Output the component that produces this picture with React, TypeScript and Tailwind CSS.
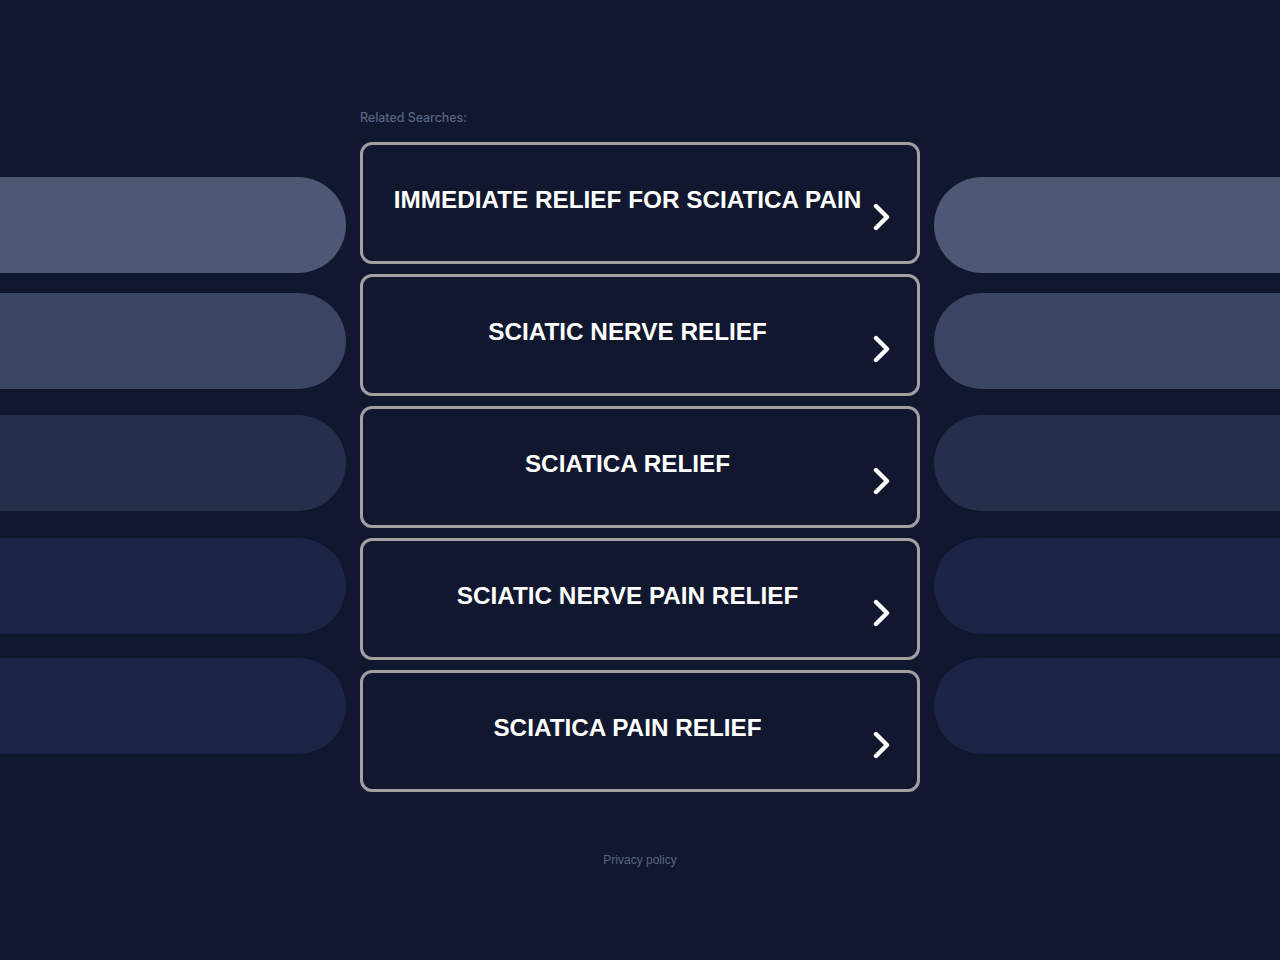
const SEARCHES = [
  "IMMEDIATE RELIEF FOR SCIATICA PAIN",
  "SCIATIC NERVE RELIEF",
  "SCIATICA RELIEF",
  "SCIATIC NERVE PAIN RELIEF",
  "SCIATICA PAIN RELIEF",
];

const PILLS = [
  { className: "mt-[177px] bg-[#4e5874]" },
  { className: "mt-[20px] bg-[#3b4462]" },
  { className: "mt-[26px] bg-[#262e4c]" },
  { className: "mt-[27px] bg-[#1d2546]" },
  { className: "mt-[24px] bg-[#1c2546]" },
];

function Chevron() {
  return (
    <svg className="mt-[58px] shrink-0" width="20" height="28" viewBox="0 0 20 28" fill="none">
      <polyline
        points="4,3 15,14 4,25"
        stroke="#ffffff"
        strokeWidth="4.4"
        strokeLinecap="round"
        strokeLinejoin="round"
      />
    </svg>
  );
}

function PillColumn({ side }: { side: "left" | "right" }) {
  return (
    <div className="flex w-[346px] shrink-0 flex-col">
      {PILLS.map((p, i) => (
        <div
          key={i}
          className={`h-[96px] w-full ${p.className} ${side === "left" ? "rounded-r-[48px]" : "rounded-l-[48px]"}`}
        />
      ))}
    </div>
  );
}

export default function App() {
  return (
    <div className="min-h-[960px] w-full bg-[#11172e] font-['Liberation_Sans',Arial,sans-serif]">
      <div className="flex gap-[14px]">
        <PillColumn side="left" />
        <div className="flex w-[560px] shrink-0 flex-col">
          <p className="mt-[110px] font-['Inter',sans-serif] text-[12.4px] font-medium leading-[16px] text-[#5a6482]">
            Related Searches:
          </p>
          <div className="mt-[16px] flex flex-col gap-[10px]">
            {SEARCHES.map((s) => (
              <a
                key={s}
                href="#"
                className="flex h-[122px] items-start gap-[10px] rounded-[12px] border-[3px] border-[#a1a1a1] pl-[30px] pr-[25px]"
              >
                <span className="mt-[41px] flex-1 text-center text-[24.3px] font-bold leading-[28px] text-white">
                  {s}
                </span>
                <Chevron />
              </a>
            ))}
          </div>
          <p className="mt-[60px] text-center text-[12px] leading-[16px] text-[#5a6482]">Privacy policy</p>
        </div>
        <PillColumn side="right" />
      </div>
    </div>
  );
}
